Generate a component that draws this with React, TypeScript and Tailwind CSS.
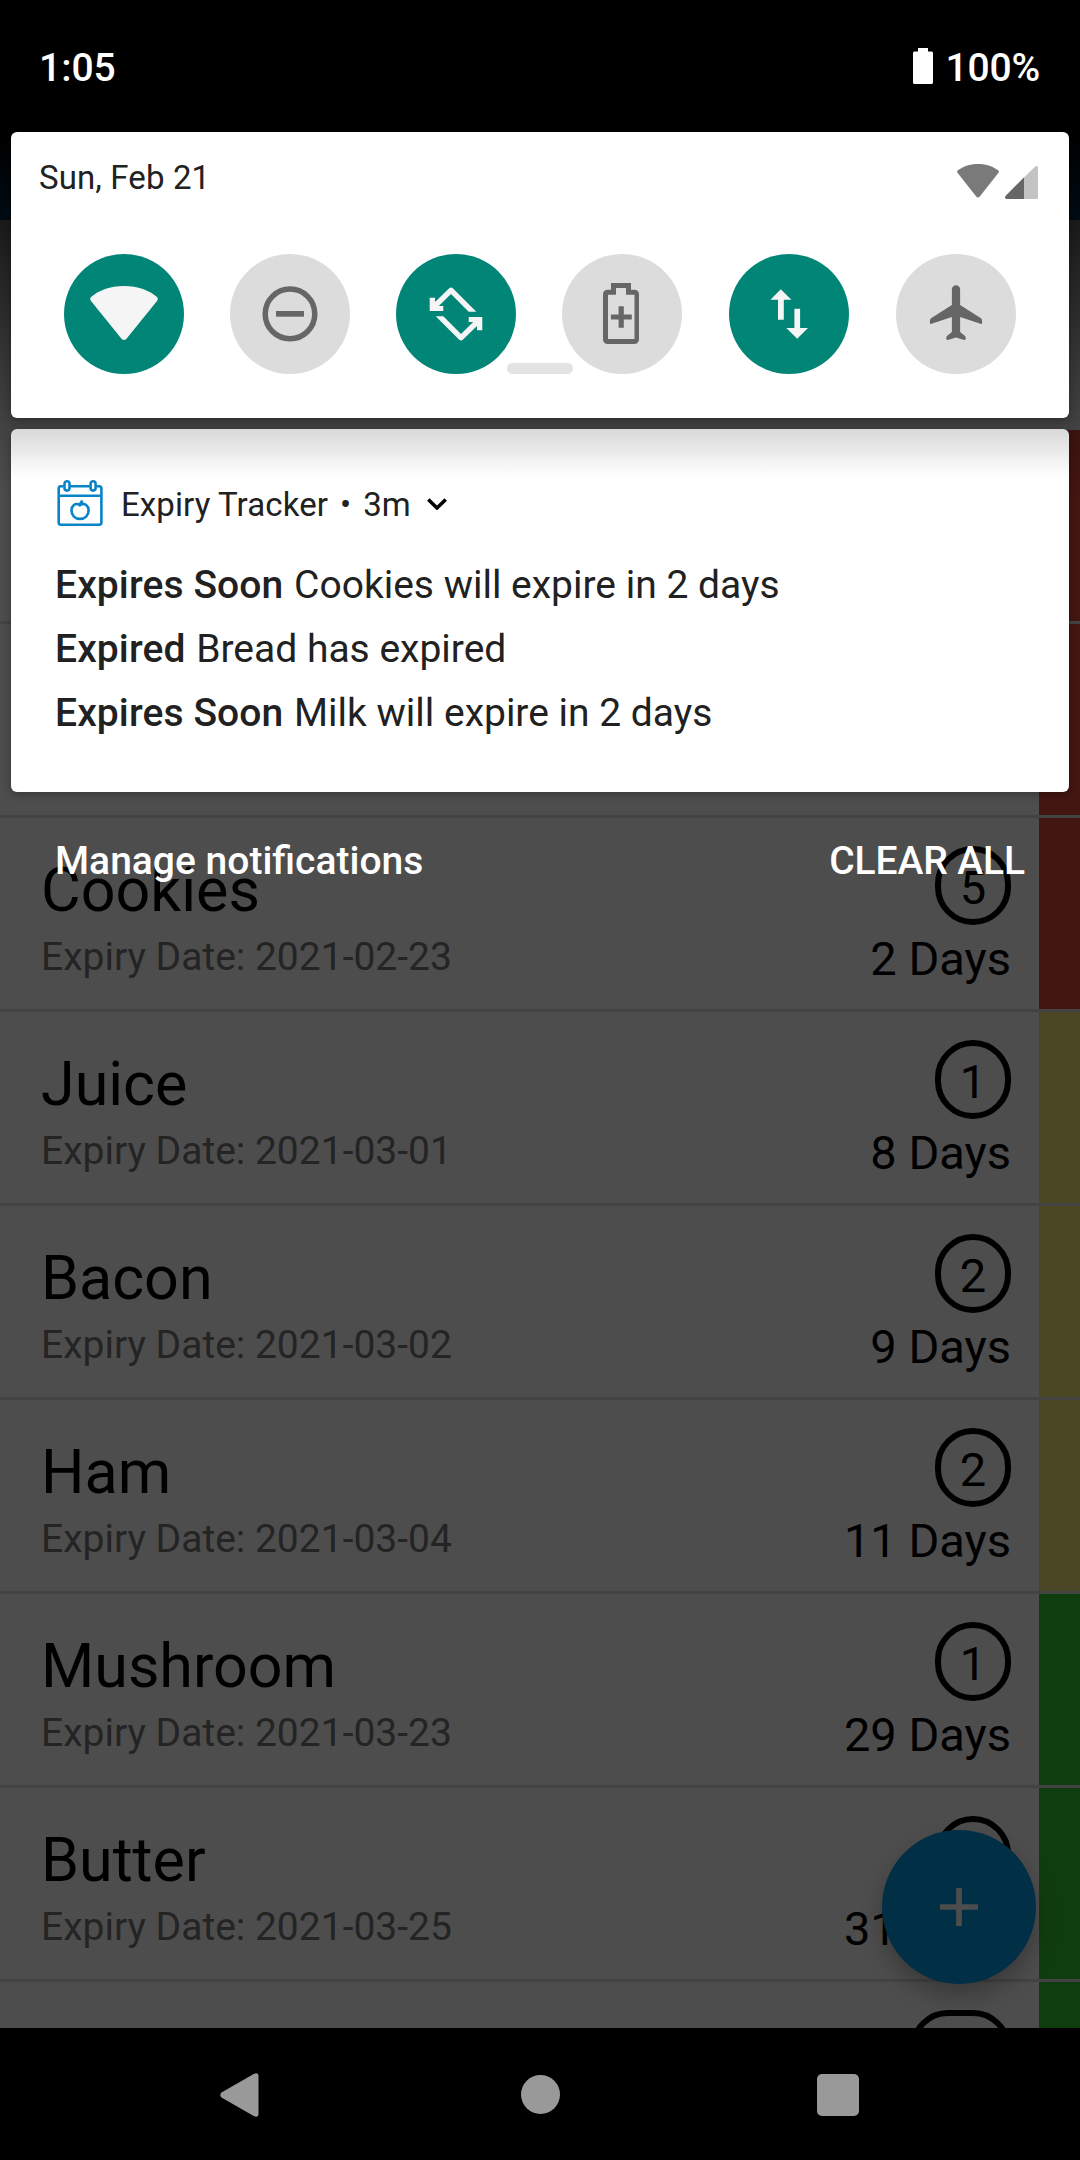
import React from "react";

type Item = { name: string; date: string; count: string; days: string; tone: string };

const items: Item[] = [
  { name: "", date: "", count: "", days: "", tone: "bg-[#431612]" },
  { name: "", date: "", count: "", days: "", tone: "bg-[#431612]" },
  { name: "Cookies", date: "2021-02-23", count: "5", days: "2 Days", tone: "bg-[#431612]" },
  { name: "Juice", date: "2021-03-01", count: "1", days: "8 Days", tone: "bg-[#4a4623]" },
  { name: "Bacon", date: "2021-03-02", count: "2", days: "9 Days", tone: "bg-[#4a4623]" },
  { name: "Ham", date: "2021-03-04", count: "2", days: "11 Days", tone: "bg-[#4a4623]" },
  { name: "Mushroom", date: "2021-03-23", count: "1", days: "29 Days", tone: "bg-[#103d0f]" },
  { name: "Butter", date: "2021-03-25", count: "1", days: "31 Days", tone: "bg-[#103d0f]" },
  { name: "", date: "", count: "12", days: "", tone: "bg-[#103d0f]" },
];

function Row({ item }: { item: Item }) {
  return (
    <div className="flex h-[194px] shrink-0 border-b-[3px] border-[#434343]">
      <div className="flex flex-1 justify-between pl-[41px] pr-[28px]">
        {item.name ? (
          <div className="pt-[37px]">
            <div className="h-[71px] text-[61px] leading-[71px] text-black">{item.name}</div>
            <div className="mt-[9px] text-[39px] leading-[45px] text-[#242424]">Expiry Date: {item.date}</div>
          </div>
        ) : (
          <div />
        )}
        <div className="flex flex-col items-end pt-[28px]">
          {item.count && (
            <div className="flex h-[79px] min-w-[76px] items-center justify-center rounded-[38px] border-[6px] border-black px-[18px] pt-[4px] text-[47px] leading-none text-black">
              {item.count}
            </div>
          )}
          <div className="mt-[6px] text-[47px] leading-[55px] text-black">{item.days}</div>
        </div>
      </div>
      <div className={`w-[41px] ${item.tone}`} />
    </div>
  );
}

function Tile({ on, children }: { on?: boolean; children: React.ReactNode }) {
  return (
    <div className={`size-[120px] shrink-0 rounded-full ${on ? "bg-[#008577] text-[#f5f5f5]" : "bg-[#dcdcdc] text-[#666]"}`}>
      <svg viewBox="0 0 120 120" className="size-[120px]" fill="currentColor">
        {children}
      </svg>
    </div>
  );
}

const rotateArrow =
  "M33.700 43.700H39V48L53.200 34.300Q55 32.900 56.800 34.300L80.300 57.700H72.700L55 40L42.800 52H47.300V57H33.700Z";

function QuickSettings() {
  return (
    <section className="relative h-[286px] rounded-[6px] bg-white shadow-[0_2px_10px_rgba(0,0,0,0.35)]">
      <div className="flex h-[90px] items-center justify-between pl-[28px] pr-[31px]">
        <span className="text-[33px] leading-[39px] tracking-[0.12px] text-[#222]">Sun, Feb 21</span>
        <div className="flex gap-[6px] pt-[10px]">
          <svg viewBox="0 0 42 36" className="h-[36px] w-[42px]" fill="#7a7a7a">
            <path d="M21 0C12.500 0 5.500 2.700 .600 6.600Q-.400 7.500 .500 8.800L19.200 32.500Q21 34.500 22.800 32.500L41.500 8.800Q42.400 7.500 41.400 6.600C36.500 2.700 29.500 0 21 0Z" />
          </svg>
          <svg viewBox="0 0 33 36" className="h-[36px] w-[33px]">
            <path d="M19 13.500L30 2.800Q33 .800 33 3.500V33.500Q33 35 31.500 35H19Z" fill="#c3c3c3" />
            <path d="M19 13.300V35H1.500Q-.800 34.500 .500 32Z" fill="#666" />
          </svg>
        </div>
      </div>
      <div className="grid grid-cols-[166px_166px_166px_167px_167px_120px] pl-[53px] pt-[32px]">
        <Tile on>
          <path d="M60 32C46 32 34.500 36.500 27 43Q25.300 44.800 26.800 46.800L57.500 84.700Q60 87.500 62.500 84.700L93.200 46.800Q94.700 44.800 93 43C85.500 36.500 74 32 60 32Z" />
        </Tile>
        <Tile>
          <circle cx="60" cy="59.900" r="24.800" fill="none" stroke="currentColor" strokeWidth="5.500" />
          <path d="M46 57h28v5.700H46Z" />
        </Tile>
        <Tile on>
          <path d={rotateArrow} />
          <path d={rotateArrow} transform="rotate(180 60 60)" />
        </Tile>
        <Tile>
          <path d="M49 29H69V35.700H72Q77 35.700 77 40.700V85Q77 90 72 90H46Q41 90 41 85V40.700Q41 35.700 46 35.700H49ZM54 34V40.700H46V85H72.500V40.700H64V34Z" fillRule="evenodd" />
          <path d="M56.600 52.300h5.200v8.300h8v4.900h-8v8.200h-5.200v-8.200h-7.700v-4.900h7.700Z" />
        </Tile>
        <Tile on>
          <path d="M51.800 35.300L62.400 45.700H54.800V65.700H49V45.700H41.400ZM68.200 84.700L57.300 74H65.400V54.700H71.100V74H79Z" />
        </Tile>
        <Tile>
          <path
            transform="translate(27 25.800) scale(2.750)"
            d="M13.500 9.200V3.500a1.500 1.500 0 0 0-3 0V9.200L3.200 13.800Q2.500 14.200 2.500 15V15.600Q2.500 16.200 3.100 16L10.500 13.500V19L8.800 20.300Q8.500 20.500 8.500 20.900V21.500Q8.500 22 9 21.900L12 21L15 21.900Q15.500 22 15.500 21.500V20.900Q15.500 20.500 15.200 20.300L13.500 19V13.500L20.900 16Q21.500 16.200 21.500 15.600V15Q21.500 14.200 20.800 13.800Z"
          />
        </Tile>
      </div>
      <div className="absolute left-[496px] top-[231px] h-[11px] w-[66px] rounded-full bg-[#e3e3e3]" />
    </section>
  );
}

function Notification() {
  const lines = [
    ["Expires Soon", "Cookies will expire in 2 days"],
    ["Expired", "Bread has expired"],
    ["Expires Soon", "Milk will expire in 2 days"],
  ];
  return (
    <section className="mt-[11px] h-[363px] rounded-[6px] bg-white bg-[linear-gradient(#d9d9d9,#e6e6e6_18px,#f6f6f6_36px,#ffffff_50px)] pl-[44px] pt-[50px] text-[#212121] shadow-[0_2px_8px_rgba(0,0,0,0.3)]">
      <div className="flex h-[50px] items-center">
        <svg viewBox="0 0 48 48" className="size-[48px]" fill="none" stroke="#0a84c8" strokeWidth="2.600">
          <path d="M8.500 6.200H6Q3.700 6.200 3.700 8.500V42.500Q3.700 44.800 6 44.800H44.100Q46.400 44.800 46.400 42.500V8.500Q46.400 6.200 44.100 6.200H41.500M15 6.200H34.800M3.700 15.700H46.400" />
          <rect x="9.500" y="1.300" width="5" height="9.300" rx="2.500" />
          <rect x="35.600" y="1.300" width="5" height="9.300" rx="2.500" />
          <path d="M25 25C20 22.200 16.500 26 16.500 30.500C16.500 35.500 20 38.900 25 38.900C30 38.900 33.600 35.500 33.600 30.500C33.600 26 30 22.200 25 25ZM25 26.500Q24.500 22.800 27.800 21" />
        </svg>
        <span className="ml-[18px] text-[33px] leading-[39px] tracking-[0.100px]">Expiry Tracker</span>
        <span className="ml-[12px] text-[33px] leading-[39px]">•</span>
        <span className="ml-[12px] text-[33px] leading-[39px] tracking-[0.100px]">3m</span>
        <svg viewBox="0 0 20 12" className="ml-[16px] h-[12px] w-[20px]" fill="none" stroke="#000" strokeWidth="3.500">
          <path d="M1.300 1.500L10 10L18.700 1.500" />
        </svg>
      </div>
      <div className="mt-[24px] flex flex-col">
        {lines.map(([title, text], i) => (
          <div key={i} className="h-[64px] whitespace-pre text-[39px] leading-[64px]">
            <span className="font-medium tracking-[0.100px]">{title}</span>
            {" "}
            <span className="ml-[1px]">{text}</span>
          </div>
        ))}
      </div>
    </section>
  );
}

function Shade() {
  return (
    <div className="absolute inset-x-0 top-0">
      <header className="flex h-[132px] items-center justify-between pl-[39px] pr-[40px] text-[39px] font-medium leading-[45px] text-white">
        <span className="pt-[5px]">1:05</span>
        <div className="flex items-center">
          <svg viewBox="0 0 20 36" className="mr-[13px] h-[36px] w-[20px]" fill="#fff">
            <path d="M5 0h10v3.500h3.500q1.500 0 1.500 1.500v29.500q0 1.500-1.500 1.500h-17q-1.500 0-1.500-1.500v-29.500q0-1.500 1.500-1.500h3.500Z" />
          </svg>
          <span className="pt-[5px] tracking-[-0.200px]">100%</span>
        </div>
      </header>
      <div className="px-[11px]">
        <QuickSettings />
        <Notification />
        <footer className="flex justify-between px-[44px] pt-[47px] text-[39px] font-medium leading-[45px] text-white">
          <span>Manage notifications</span>
          <span className="tracking-[-0.100px]">CLEAR ALL</span>
        </footer>
      </div>
    </div>
  );
}

export default function App() {
  return (
    <div className="relative flex h-[2160px] w-[1080px] flex-col overflow-hidden bg-[#4d4d4d] font-['Roboto',sans-serif]">
      <div className="h-[220px] shrink-0 bg-[linear-gradient(#000000_132px,#000c14_220px)]" />
      <div className="h-[210px] shrink-0 bg-[linear-gradient(#1a1a1a,#434343)]" />
      <main className="relative h-[1598px] shrink-0 overflow-hidden">
        {items.map((item, i) => (
          <Row key={i} item={item} />
        ))}
        <div className="absolute inset-x-0 top-0 h-[70px] bg-linear-to-b from-black/13 to-transparent" />
      </main>
      <nav className="flex h-[132px] shrink-0 items-center bg-black pt-px">
        <svg viewBox="0 0 40 46" className="ml-[220px] h-[46px] w-[39px]" fill="#999">
          <path d="M1.500 20.500L35 1.200Q39.500-.500 39.500 4V42Q39.500 46.500 35 44.800L1.500 25.500Q-1 23 1.500 20.500Z" />
        </svg>
        <div className="ml-[262px] size-[39px] rounded-full bg-[#999]" />
        <div className="ml-[257px] size-[42px] rounded-[5px] bg-[#999]" />
      </nav>
      <button className="absolute left-[882px] top-[1830px] flex size-[154px] items-center justify-center rounded-full bg-[#002f46] shadow-[0_12px_22px_rgba(0,0,0,0.25)]">
        <svg viewBox="0 0 38 38" className="size-[38px]" fill="none" stroke="#4d4d4d" strokeWidth="5.700">
          <path d="M19 0V38M0 19H38" />
        </svg>
      </button>
      <Shade />
    </div>
  );
}
